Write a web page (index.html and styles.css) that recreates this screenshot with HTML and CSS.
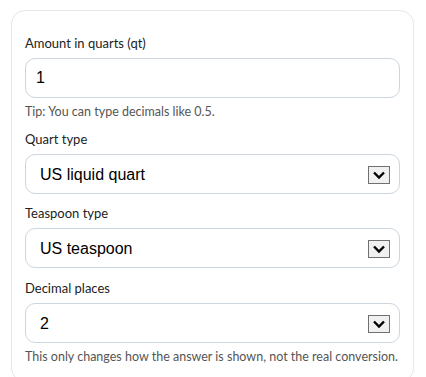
FILE: index.html
```html
<!DOCTYPE html>
<html lang="en">
<head>
  <meta charset="UTF-8">
  <title>Quarts to teaspoons</title>
  <link rel="stylesheet" href="styles.css">
</head>
<body>
  <div class="card">
    <div class="field">
      <label for="amount">Amount in quarts (qt)</label>
      <input type="text" id="amount" class="control" value="1">
      <p class="hint">Tip: You can type decimals like 0.5.</p>
    </div>

    <div class="field">
      <label for="quart">Quart type</label>
      <div class="select-wrap">
        <select id="quart" class="control">
          <option>US liquid quart</option>
          <option>US dry quart</option>
          <option>Imperial quart</option>
        </select>
        <svg class="arrow" width="22" height="18" viewBox="0 0 22 18"><rect x="0.5" y="0.5" width="21" height="17" fill="#f0f0f0" stroke="#707070"/><path d="M6 6.5l5 5 5-5" fill="none" stroke="#000" stroke-width="2.4"/></svg>
      </div>
    </div>

    <div class="field">
      <label for="tsp">Teaspoon type</label>
      <div class="select-wrap">
        <select id="tsp" class="control">
          <option>US teaspoon</option>
          <option>Metric teaspoon</option>
          <option>Imperial teaspoon</option>
        </select>
        <svg class="arrow" width="22" height="18" viewBox="0 0 22 18"><rect x="0.5" y="0.5" width="21" height="17" fill="#f0f0f0" stroke="#707070"/><path d="M6 6.5l5 5 5-5" fill="none" stroke="#000" stroke-width="2.4"/></svg>
      </div>
    </div>

    <div class="field field-last">
      <label for="places">Decimal places</label>
      <div class="select-wrap">
        <select id="places" class="control">
          <option>0</option>
          <option>1</option>
          <option selected>2</option>
          <option>3</option>
          <option>4</option>
        </select>
        <svg class="arrow" width="22" height="18" viewBox="0 0 22 18"><rect x="0.5" y="0.5" width="21" height="17" fill="#f0f0f0" stroke="#707070"/><path d="M6 6.5l5 5 5-5" fill="none" stroke="#000" stroke-width="2.4"/></svg>
      </div>
      <p class="hint">This only changes how the answer is shown, not the real conversion.</p>
    </div>
  </div>
</body>
</html>
```

FILE: styles.css
```css
body {
  margin: 0;
  padding: 10px 12px 0 11px;
  background: #fff;
  font-family: Lato, "Liberation Sans", sans-serif;
  color: #222;
}
.card {
  border: 1px solid #e4e6e9;
  border-radius: 14px;
  padding: 23px 13px 16px;
}
.field + .field {
  margin-top: 10px;
}
.field-last {
  padding-top: 1px;
}
label {
  display: block;
  font-size: 13px;
  line-height: 18px;
  margin-bottom: 6px;
  color: #222;
}
.control {
  display: block;
  width: 100%;
  height: 40px;
  box-sizing: border-box;
  border: 1px solid #cdd5df;
  border-radius: 10px;
  padding: 0 10px;
  font-family: "Liberation Sans", Arial, sans-serif;
  font-size: 16px;
  color: #000;
  background: #fff;
  outline: none;
}
select.control {
  appearance: none;
  -webkit-appearance: none;
  padding-left: 14px;
}
.select-wrap {
  position: relative;
}
.arrow {
  position: absolute;
  right: 10px;
  top: 12px;
  pointer-events: none;
}
.hint {
  margin: 6px 0 0;
  font-size: 12.5px;
  line-height: 16px;
  color: #555;
  white-space: nowrap;
}
```
